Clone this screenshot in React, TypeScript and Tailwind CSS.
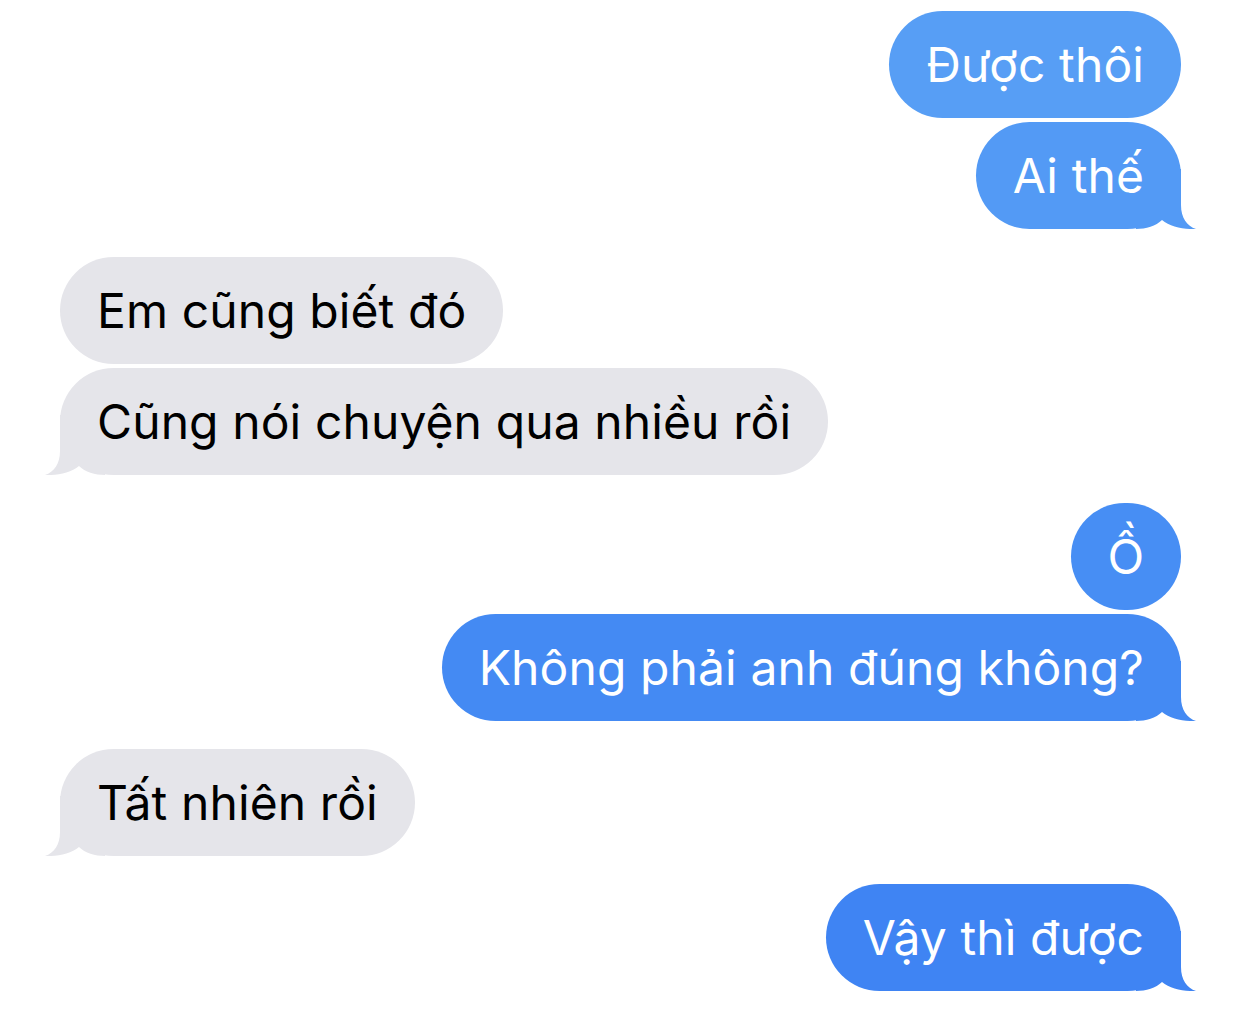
type Msg = {
  text: string;
  me: boolean;
  tail?: boolean;
  gap: "group" | "same" | "first";
  color?: string;
  round?: boolean;
};

const messages: Msg[] = [
  { text: "Được thôi", me: true, gap: "first", color: "#579ef5" },
  { text: "Ai thế", me: true, tail: true, gap: "same", color: "#539af5" },
  { text: "Em cũng biết đó", me: false, gap: "group" },
  { text: "Cũng nói chuyện qua nhiều rồi", me: false, tail: true, gap: "same" },
  { text: "Ồ", me: true, gap: "group", color: "#478ef4", round: true },
  { text: "Không phải anh đúng không?", me: true, tail: true, gap: "same", color: "#448af3" },
  { text: "Tất nhiên rồi", me: false, tail: true, gap: "group" },
  { text: "Vậy thì được", me: true, tail: true, gap: "group", color: "#3f84f3" },
];

const Tail = ({ fill, left }: { fill: string; left?: boolean }) => (
  <svg
    width="60"
    height="60"
    viewBox="0 0 60 60"
    className={left ? "absolute bottom-0 left-[-15px] -scale-x-100" : "absolute bottom-0 right-[-15px]"}
  >
    <path
      d="M0 0 L45 0 L45 36 C45 49 51 57 60 60 C48 60.5 34 58 26 51 C20 57 10 60 0 60 Z"
      fill={fill}
    />
  </svg>
);

const Bubble = ({ m }: { m: Msg }) => {
  const fill = m.me ? m.color ?? "#3f84f3" : "#e5e5ea";
  const spacing = m.gap === "first" ? "" : m.gap === "same" ? "mt-[4px]" : "mt-[28px]";
  return (
    <div className={`flex ${m.me ? "justify-end" : "justify-start"} ${spacing}`}>
      <div
        className={`relative flex h-[107px] items-center rounded-[54px] text-[48px] tracking-[0.1px] ${
          m.round ? "w-[110px] justify-center" : "px-[37px]"
        } ${m.me ? "text-white" : "text-black"}`}
        style={{ backgroundColor: fill }}
      >
        {m.tail && <Tail fill={fill} left={!m.me} />}
        <span className="relative leading-none">{m.text}</span>
      </div>
    </div>
  );
};

export default function App() {
  return (
    <div
      className="min-h-screen w-[1242px] bg-white pl-[60px] pr-[61px] pt-[11px]"
      style={{ fontFamily: "Inter, 'Noto Sans', sans-serif" }}
    >
      {messages.map((m, i) => (
        <Bubble key={i} m={m} />
      ))}
    </div>
  );
}
